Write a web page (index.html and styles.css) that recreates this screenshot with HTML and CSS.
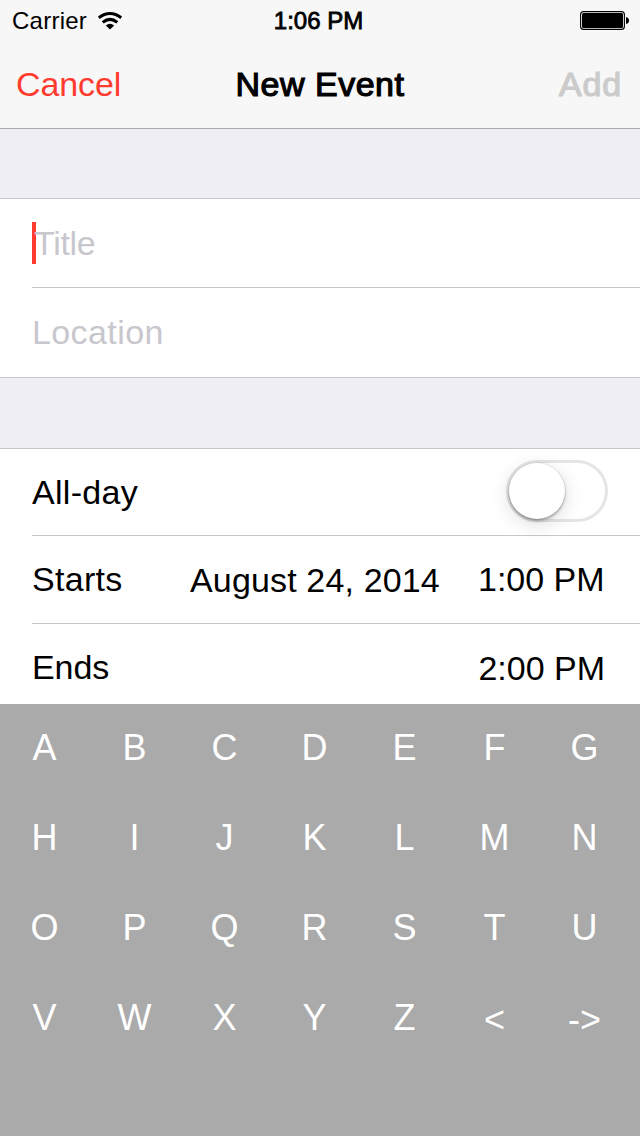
FILE: index.html
```html
<!DOCTYPE html>
<html lang="en">
<head>
<meta charset="utf-8">
<title>New Event</title>
<link rel="stylesheet" href="styles.css">
</head>
<body>
<div class="screen">
  <header class="top">
    <div class="status">
      <div class="status-left">
        <span class="carrier">Carrier</span>
        <svg class="wifi" width="26" height="20" viewBox="0 0 26 20">
          <g fill="none" stroke="#000" stroke-width="3">
            <path d="M1.8 6.7Q13 -1.6 24.2 6.7"/>
            <path d="M5.7 11.3Q13 5.5 20.3 11.3"/>
          </g>
          <path d="M8.8 14.4Q13 11.2 17.2 14.4L13 18.6Z"/>
        </svg>
      </div>
      <div class="clock">1:06 PM</div>
      <svg class="battery" width="50" height="20" viewBox="0 0 50 20">
        <rect x="0.6" y="0.6" width="43.8" height="17.8" rx="3" fill="none" stroke="#000" stroke-width="1.1"/>
        <rect x="2" y="2" width="41" height="15" rx="1.5"/>
        <path d="M46 6Q49 6.5 49 9.5Q49 12.5 46 13Z"/>
      </svg>
    </div>
    <nav class="nav">
      <span class="cancel">Cancel</span>
      <h1 class="heading">New Event</h1>
      <span class="add">Add</span>
    </nav>
  </header>
  <main class="form">
    <section class="group">
      <div class="row title-row"><i class="caret"></i><span class="title-text">Title</span></div>
      <div class="row location-row"><span class="location-text">Location</span></div>
    </section>
    <section class="group">
      <div class="row allday-row"><span class="allday">All-day</span><div class="switch"><div class="knob"></div></div></div>
      <div class="row starts-row"><span class="starts">Starts</span><span class="date">August 24, 2014</span><span class="start-time">1:00 PM</span></div>
      <div class="row ends-row"><span class="ends">Ends</span><span class="end-time">2:00 PM</span></div>
    </section>
  </main>
  <div class="keyboard">
    <span>A</span><span>B</span><span>C</span><span>D</span><span>E</span><span>F</span><span>G</span>
    <span>H</span><span>I</span><span>J</span><span>K</span><span>L</span><span>M</span><span>N</span>
    <span>O</span><span>P</span><span>Q</span><span>R</span><span>S</span><span>T</span><span>U</span>
    <span>V</span><span>W</span><span>X</span><span>Y</span><span>Z</span><span class="sign">&lt;</span><span class="sign">-&gt;</span>
  </div>
</div>
</body>
</html>
```
FILE: styles.css
```css
* { box-sizing: border-box; }
body { margin: 0; }
.screen {
  width: 640px;
  height: 1136px;
  overflow: hidden;
  display: flex;
  flex-direction: column;
  background: #efeef4;
  color: #000;
  font: 34px/40px "Liberation Sans", Arial, sans-serif;
  white-space: nowrap;
}
.top {
  height: 129px;
  flex: none;
  background: #f7f7f7;
  border-bottom: 1px solid #a9a9ac;
}
.status {
  height: 41px;
  display: grid;
  grid-template-columns: 1fr auto 1fr;
  align-items: center;
  padding: 1px 10px 0 12px;
  font-size: 24px;
}
.status-left { display: flex; align-items: center; }
.carrier { letter-spacing: 0.25px; }
.wifi { margin: 0 0 0 10px; }
.clock {
  -webkit-text-stroke: 0.8px #000;
  margin-right: 5px;
}
.battery { justify-self: end; }
.nav {
  height: 87px;
  display: grid;
  grid-template-columns: 1fr auto 1fr;
  align-items: center;
  padding: 0 18px 2px 16px;
}
.cancel { color: #ff3b30; letter-spacing: -0.1px; }
.heading {
  margin: 0 0 0 2px;
  font-size: 34px;
  font-weight: normal;
  letter-spacing: 0.5px;
  -webkit-text-stroke: 1.2px #000;
}
.add {
  justify-self: end;
  color: #cbcbcb;
  letter-spacing: 0.8px;
  -webkit-text-stroke: 1.2px #cbcbcb;
}
.form { height: 575px; flex: none; }
.group {
  margin-top: 69px;
  padding-left: 32px;
  background: #fff;
  border-top: 1px solid #c8c7cc;
  border-bottom: 1px solid #c8c7cc;
}
.group + .group { margin-top: 70px; border-bottom: 0; }
.row { display: flex; align-items: center; border-bottom: 1px solid #c8c7cc; }
.row:last-child { border-bottom: 0; }
.title-row { height: 89px; color: #c7c7cd; }
.caret { width: 4px; height: 42px; background: #ff3b30; }
.title-text { margin-left: -2px; letter-spacing: -0.3px; }
.location-row { height: 89px; padding-bottom: 2px; color: #c7c7cd; letter-spacing: 0.4px; }
.allday-row { height: 87px; justify-content: space-between; padding-right: 32px; }
.allday { letter-spacing: 0.3px; }
.starts-row { height: 88px; }
.ends-row { height: 80px; justify-content: space-between; padding: 8px 35px 0 0; }
.starts { width: 158px; padding-bottom: 2px; letter-spacing: 0.3px; }
.date { width: 288px; letter-spacing: 0.15px; }
.start-time { padding-bottom: 2px; }
.ends { padding-bottom: 2px; letter-spacing: -0.1px; }
.switch {
  width: 102px;
  height: 62px;
  border: 3px solid #e5e5e5;
  border-radius: 31px;
  margin-top: -3px;
}
.knob {
  width: 56px;
  height: 56px;
  border-radius: 50%;
  background: #fff;
  box-shadow: 0 0 0 1px rgba(0,0,0,.05), 0 2px 3px rgba(0,0,0,.3), 0 5px 20px rgba(0,0,0,.14);
}
.keyboard {
  flex: 1;
  display: grid;
  grid-template-columns: repeat(7, 90px);
  grid-auto-rows: 90px;
  align-content: start;
  background: #aaa;
  color: #fff;
  font-size: 36px;
  line-height: 88px;
  text-align: center;
}
.keyboard span { padding-right: 1px; }
.keyboard .sign { padding-top: 2px; padding-right: 1px; }
```
